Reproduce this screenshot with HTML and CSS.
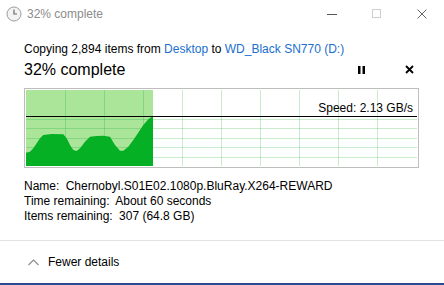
FILE: index.html
```html
<!DOCTYPE html>
<html lang="en">
<head>
    <meta charset="UTF-8">
    <meta name="viewport" content="width=device-width, initial-scale=1.0">
    <title>32% complete</title>
    <link rel="stylesheet" href="styles.css">
</head>
<body>
    <div class="titlebar">
        <svg class="app-icon" width="16" height="16" viewBox="0 0 16 16">
            <circle cx="8" cy="8" r="7" fill="#f3f3f3" stroke="#9c9c9c" stroke-width="1"/>
            <path d="M8 3.5 V8 H11" fill="none" stroke="#6a6a6a" stroke-width="1.2"/>
        </svg>
        <span class="title">32% complete</span>
        <div class="caption-buttons">
            <div class="caption-btn">
                <svg width="10" height="10" viewBox="0 0 10 10"><path d="M0 5.5 H10" stroke="#555" stroke-width="1"/></svg>
            </div>
            <div class="caption-btn">
                <svg width="10" height="10" viewBox="0 0 10 10"><rect x="0.5" y="0.5" width="8" height="8" fill="none" stroke="#cfcfcf" stroke-width="1"/></svg>
            </div>
            <div class="caption-btn">
                <svg width="10" height="10" viewBox="0 0 10 10"><path d="M0.5 0.5 L9.5 9.5 M9.5 0.5 L0.5 9.5" stroke="#666" stroke-width="1"/></svg>
            </div>
        </div>
    </div>

    <div class="content">
        <div class="headline">Copying 2,894 items from <span class="link">Desktop</span> to <span class="link">WD_Black SN770 (D:)</span></div>

        <div class="progress-row">
            <span class="percent">32% complete</span>
            <div class="actions">
                <svg class="pause" width="8" height="8" viewBox="0 0 8 8"><rect x="0" y="0" width="2.5" height="8" fill="#000"/><rect x="4.5" y="0" width="2.5" height="8" fill="#000"/></svg>
                <svg class="cancel" width="9" height="9" viewBox="0 0 9 9"><path d="M1 1 L8 8 M8 1 L1 8" stroke="#000" stroke-width="1.8"/></svg>
            </div>
        </div>

        <div class="chart">
            <svg width="391" height="76" viewBox="0 0 391 76" shape-rendering="crispEdges">
                <rect x="0" y="0" width="127" height="76" fill="#aae599"/>
                <g stroke="rgba(0,170,30,0.22)" stroke-width="1">
                    <path d="M39.1 0 V76 M78.2 0 V76 M117.3 0 V76 M156.4 0 V76 M195.5 0 V76 M234.6 0 V76 M273.7 0 V76 M312.8 0 V76 M351.9 0 V76"/>
                    <path d="M0 29.3 H391 M0 38.3 H391 M0 48.3 H391 M0 57.7 H391 M0 67.3 H391"/>
                </g>
                <polygon fill="#06b025" shape-rendering="auto" points="0,76 0,62.7 4,61.7 7.3,58.3 10.7,53.3 14,48.3 17.3,45 25.7,44 37.3,44.3 40.7,48.3 44,55 47.3,60 50.7,61 54,58.3 59,51.7 64,46.7 70.7,46 77.3,45.7 84,46.7 89,55 94,60.7 97.3,60.7 102.3,56.7 107.3,50 110.7,45 117.3,35 122.3,29.3 127,26 127,76"/>
                <path d="M0 26.5 H391" stroke="#000" stroke-width="1"/>
            </svg>
            <span class="speed">Speed: 2.13 GB/s</span>
        </div>

        <div class="details">
            <div><span class="label">Name:</span> Chernobyl.S01E02.1080p.BluRay.X264-REWARD</div>
            <div><span class="label">Time remaining:</span> About 60 seconds</div>
            <div><span class="label">Items remaining:</span> 307 (64.8 GB)</div>
        </div>
    </div>

    <div class="footer">
        <svg class="chevron" width="11" height="7" viewBox="0 0 11 7"><path d="M0.5 6 L5.5 1 L10.5 6" fill="none" stroke="#8a8a8a" stroke-width="1.1"/></svg>
        <span>Fewer details</span>
    </div>
</body>
</html>
```

FILE: styles.css
```css
body {
    font-family: "Liberation Sans", Arial, sans-serif;
    font-size: 12px;
    margin: 0;
    padding: 0;
    width: 444px;
    height: 285px;
    background-color: white;
    color: #000;
    overflow: hidden;
    display: flex;
    flex-direction: column;
    border-bottom: 2px solid #2a4b92;
    box-sizing: border-box;
}

.titlebar {
    display: flex;
    align-items: center;
    height: 28px;
    padding-left: 6px;
}

.app-icon {
    display: block;
}

.title {
    margin-left: 5px;
    color: #8c8c8c;
    font-size: 12px;
}

.caption-buttons {
    display: flex;
    margin-left: auto;
    height: 28px;
}

.caption-btn {
    width: 45px;
    display: flex;
    align-items: center;
    justify-content: center;
}

.caption-btn svg {
    display: block;
}

.content {
    padding: 0 24px;
}

.headline {
    margin-top: 14px;
    line-height: 15px;
}

.link {
    color: #1a6fce;
}

.progress-row {
    display: flex;
    align-items: center;
    height: 25px;
}

.percent {
    font-size: 16px;
}

.actions {
    display: flex;
    align-items: center;
    margin-left: auto;
}

.pause {
    display: block;
    margin-right: 39px;
}

.cancel {
    display: block;
    margin-right: 6px;
}

.chart {
    position: relative;
    margin-top: 6px;
    width: 391px;
    height: 76px;
    padding: 1px;
    border: 1px solid #bdbdbd;
}

.chart svg {
    display: block;
}

.speed {
    position: absolute;
    right: 5px;
    top: 12px;
    line-height: 14px;
}

.details {
    margin-top: 11px;
    line-height: 15px;
}

.label {
    margin-right: 3px;
}

.footer {
    margin-top: auto;
    height: 42px;
    border-top: 1px solid #e3e3e3;
    display: flex;
    align-items: center;
    padding-left: 28px;
}

.chevron {
    display: block;
    margin-right: 9px;
}
```
